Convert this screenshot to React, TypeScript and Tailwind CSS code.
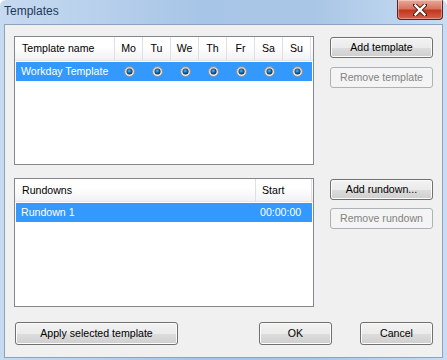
import React from "react";

const days = ["Mo", "Tu", "We", "Th", "Fr", "Sa", "Su"];

function Radio() {
  return (
    <svg width="11" height="11" viewBox="0 0 11 11">
      <defs>
        <radialGradient id="rg" cx="0.45" cy="0.4" r="0.6">
          <stop offset="0" stopColor="#5fb4ee" />
          <stop offset="0.5" stopColor="#1b6aa8" />
          <stop offset="1" stopColor="#0e2c47" />
        </radialGradient>
        <linearGradient id="og" x1="0" y1="0" x2="0" y2="1">
          <stop offset="0" stopColor="#c9c9c9" />
          <stop offset="1" stopColor="#f4f4f4" />
        </linearGradient>
      </defs>
      <circle cx="5.5" cy="5.5" r="5" fill="url(#og)" stroke="#8c8f93" strokeWidth="1" />
      <circle cx="5.5" cy="5.5" r="3" fill="url(#rg)" />
    </svg>
  );
}

function Btn({ children, disabled, className = "" }: { children: React.ReactNode; disabled?: boolean; className?: string }) {
  if (disabled) {
    return (
      <div
        className={
          "flex items-center justify-center rounded-[3px] border border-[#adb2b5] bg-[#f4f4f4] text-[#838383] " +
          className
        }
      >
        {children}
      </div>
    );
  }
  return (
    <div
      className={
        "flex items-center justify-center rounded-[3px] border border-[#707070] bg-[linear-gradient(#f2f2f2_0%,#ebebeb_50%,#dddddd_51%,#cfcfcf_100%)] text-black shadow-[inset_0_0_0_1px_#fcfcfc] " +
        className
      }
    >
      {children}
    </div>
  );
}

export default function App() {
  return (
    <div
      className="relative w-[447px] h-[360px] overflow-hidden rounded-t-[6px] bg-[linear-gradient(90deg,#c6daf0_0%,#b9d1ec_20%,#a7c5e6_45%,#a9c6e6_70%,#c8dcf2_100%)] text-[10.6px] leading-none"
      style={{ fontFamily: '"Liberation Sans", Arial, sans-serif' }}
    >
      {/* title bar */}
      <div className="flex h-[24px] items-center justify-between pl-[4px] pr-[4px]">
        <span className="text-[12px] text-[#1e395b] mt-[-2px]" style={{ fontFamily: '"Liberation Sans", Arial, sans-serif' }}>
          Templates
        </span>
      </div>
      {/* close button */}
      <div className="absolute right-[4px] top-0 flex h-[20px] w-[46px] items-center justify-center rounded-b-[4px] border border-t-0 border-[#5e2020] bg-[linear-gradient(#e9a99a_0%,#d8735f_45%,#c0381d_55%,#d6604a_100%)] shadow-[inset_0_0_0_1px_rgba(255,255,255,0.35)]">
        <svg width="14" height="12" viewBox="0 0 14 12">
          <path d="M2 1 L12 11 M12 1 L2 11" stroke="#4a1b12" strokeWidth="4.2" strokeLinecap="square" />
          <path d="M2.5 1.5 L11.5 10.5 M11.5 1.5 L2.5 10.5" stroke="#ffffff" strokeWidth="2.4" strokeLinecap="square" />
        </svg>
      </div>

      {/* content */}
      <div className="mx-[4px] mb-0 h-[334px] border border-[#8da3bd] bg-[#f0f0f0] pl-[9px] pt-[11px]">
        {/* top section */}
        <div className="flex">
          <div className="h-[129px] w-[300px] border border-[#828790] bg-white">
            <div className="flex h-[24px] border-b border-[#e5e5e5] bg-[linear-gradient(#ffffff_0%,#ffffff_40%,#f1f2f4_100%)]">
              <div className="flex w-[100px] items-center border-r border-[#dedfe1] pl-[7px]">Template name</div>
              {days.map((d) => (
                <div key={d} className="flex w-[28px] items-center justify-center border-r border-[#dedfe1]">
                  {d}
                </div>
              ))}
            </div>
            <div className="mx-[1px] mt-[1px] flex h-[19px] bg-[#3399ff] text-white">
              <div className="flex w-[99px] items-center pl-[5px]">Workday Template</div>
              {days.map((d) => (
                <div key={d} className="flex w-[28px] items-center justify-center">
                  <Radio />
                </div>
              ))}
            </div>
          </div>
          <div className="ml-[16px] flex w-[103px] flex-col">
            <Btn className="h-[21px] mt-[1px]">Add template</Btn>
            <Btn disabled className="mt-[9px] h-[21px]">Remove template</Btn>
          </div>
        </div>

        {/* bottom section */}
        <div className="mt-[13px] flex">
          <div className="h-[129px] w-[300px] border border-[#828790] bg-white">
            <div className="flex h-[23px] border-b border-[#e5e5e5] bg-[linear-gradient(#ffffff_0%,#ffffff_40%,#f1f2f4_100%)]">
              <div className="flex w-[241px] items-center border-r border-[#dedfe1] pl-[7px]">Rundowns</div>
              <div className="flex w-[56px] items-center border-r border-[#dedfe1] pl-[6px]">Start</div>
            </div>
            <div className="mx-[1px] mt-[1px] flex h-[19px] bg-[#3399ff] text-white">
              <div className="flex w-[239px] items-center pl-[5px]">Rundown 1</div>
              <div className="flex flex-1 items-center pl-[5px]">00:00:00</div>
            </div>
          </div>
          <div className="ml-[16px] flex w-[103px] flex-col">
            <Btn className="h-[21px] mt-[1px]">Add rundown...</Btn>
            <Btn disabled className="mt-[8px] h-[21px]">Remove rundown</Btn>
          </div>
        </div>

        {/* footer buttons */}
        <div className="mt-[15px] flex">
          <Btn className="h-[23px] w-[163px] ml-[1px]">Apply selected template</Btn>
          <Btn className="ml-[81px] h-[23px] w-[73px]">OK</Btn>
          <Btn className="ml-[28px] h-[23px] w-[73px]">Cancel</Btn>
        </div>
      </div>
    </div>
  );
}
